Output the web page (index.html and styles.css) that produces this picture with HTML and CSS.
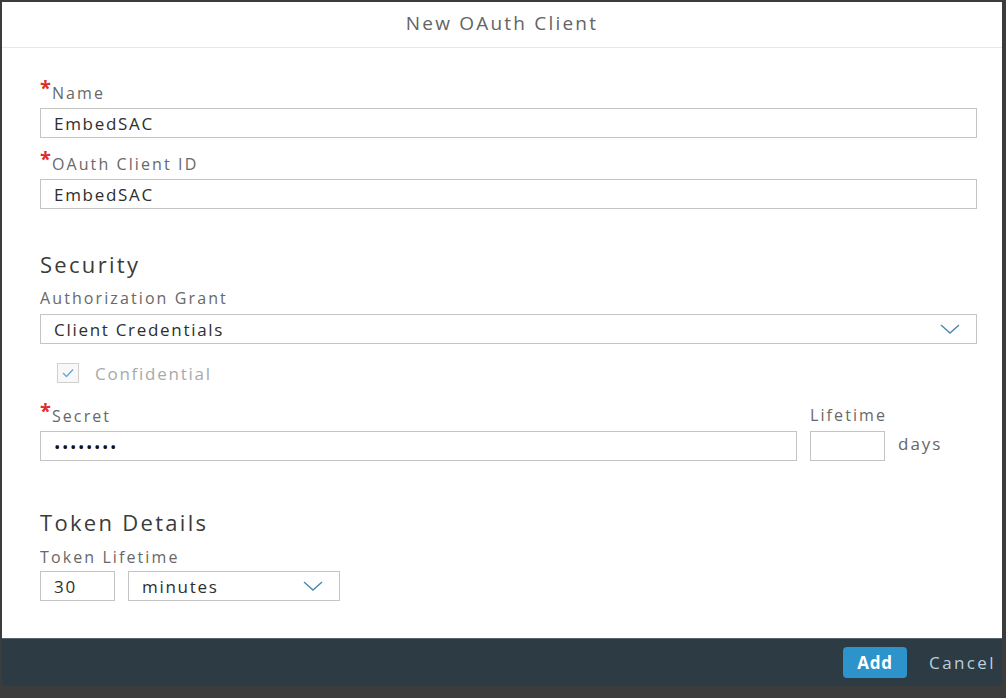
FILE: index.html
```html
<!DOCTYPE html>
<html>
<head>
<meta charset="utf-8">
<link rel="stylesheet" href="styles.css">
</head>
<body>
<div class="dialog">
  <div class="header">New OAuth Client</div>
  <div class="content">
    <div class="label"><span class="req">*</span>Name</div>
    <div class="field">EmbedSAC</div>
    <div class="label mt"><span class="req">*</span>OAuth Client ID</div>
    <div class="field">EmbedSAC</div>

    <div class="heading sec">Security</div>
    <div class="label mt-s">Authorization Grant</div>
    <div class="field select">
      <span>Client Credentials</span>
      <svg class="chev" width="20" height="10" viewBox="0 0 20 10"><path d="M1 1 L10 9 L19 1" fill="none" stroke="#4a88ab" stroke-width="1.4"/></svg>
    </div>
    <div class="check-row">
      <span class="checkbox"><svg width="14" height="10" viewBox="0 0 14 10"><path d="M2 5 L5.5 8.5 L12 1.5" fill="none" stroke="#6aa7d3" stroke-width="1.4"/></svg></span>
      <span class="check-label">Confidential</span>
    </div>
    <div class="secret-row">
      <div class="col grow">
        <div class="label"><span class="req">*</span>Secret</div>
        <div class="field"><span class="dots">••••••••</span></div>
      </div>
      <div class="col life">
        <div class="label">Lifetime</div>
        <div class="field"></div>
      </div>
      <div class="days">days</div>
    </div>

    <div class="heading tok">Token Details</div>
    <div class="label mt-t">Token Lifetime</div>
    <div class="token-row">
      <div class="field num">30</div>
      <div class="field select unit">
        <span>minutes</span>
        <svg class="chev" width="20" height="10" viewBox="0 0 20 10"><path d="M1 1 L10 9 L19 1" fill="none" stroke="#4a88ab" stroke-width="1.4"/></svg>
      </div>
    </div>
  </div>
  <div class="footer">
    <span class="btn-add">Add</span>
    <span class="btn-cancel">Cancel</span>
  </div>
</div>
</body>
</html>
```
FILE: styles.css
```css
html, body {
  margin: 0;
  padding: 0;
}
body {
  width: 1006px;
  height: 698px;
  background: #3c3c3c;
  font-family: "Open Sans", "Liberation Sans", sans-serif;
  overflow: hidden;
}
.dialog {
  margin: 2px 0 0 2px;
  width: 1000px;
  height: 684px;
  background: #ffffff;
  display: flex;
  flex-direction: column;
}
.header {
  height: 42px;
  padding-bottom: 3px;
  border-bottom: 1px solid #e6e6e6;
  display: flex;
  align-items: center;
  justify-content: center;
  font-size: 19px;
  letter-spacing: 2.2px;
  color: #646464;
}
.content {
  flex: 1;
  padding: 34px 25px 0 38px;
  display: flex;
  flex-direction: column;
}
.label {
  height: 20px;
  line-height: 20px;
  font-size: 16px;
  letter-spacing: 2.1px;
  color: #686868;
  margin-bottom: 6px;
  white-space: nowrap;
}
.req {
  color: #e22c2c;
  font-size: 20px;
  font-weight: bold;
  position: relative;
  top: -4px;
  letter-spacing: 0;
  margin-right: 1px;
}
.mt { margin-top: 15px; }
.field {
  height: 28px;
  border: 1px solid #c4c4c4;
  display: flex;
  align-items: center;
  padding-left: 13px;
  font-size: 17px;
  letter-spacing: 1.7px;
  color: #2e2e2e;
  box-sizing: content-box;
}
.select {
  justify-content: space-between;
  padding-right: 16px;
}
.chev { display: block; }
.heading {
  height: 28px;
  line-height: 28px;
  font-size: 22px;
  letter-spacing: 2.3px;
  color: #3b3b3b;
}
.sec { margin-top: 41px; }
.mt-s { margin-top: 10px; }
.check-row {
  height: 30px;
  margin-top: 14px;
  display: flex;
  align-items: center;
  padding-left: 17px;
}
.checkbox {
  width: 20px;
  height: 18px;
  border: 1px solid #cfcfcf;
  background: #f8f8f8;
  display: flex;
  align-items: center;
  justify-content: center;
}
.check-label {
  margin-left: 16px;
  font-size: 17px;
  letter-spacing: 1.75px;
  color: #a9a9a9;
}
.secret-row {
  margin-top: 17px;
  display: flex;
  gap: 13px;
  align-items: flex-end;
}
.col { display: flex; flex-direction: column; }
.grow { flex: 1; }
.life { width: 75px; }
.life .field { padding-left: 0; }
.days {
  width: 79px;
  height: 30px;
  line-height: 26px;
  font-size: 17px;
  letter-spacing: 2px;
  color: #666666;
}
.dots {
  font-size: 17px;
  letter-spacing: 1.6px;
  color: #111111;
}
.tok { margin-top: 47px; }
.mt-t { margin-top: 11px; margin-bottom: 4px; }
.token-row {
  display: flex;
  gap: 13px;
}
.num { width: 60px; }
.unit { width: 181px; }
.footer {
  height: 47px;
  border-top: 1px solid #56656d;
  background: #2d3c44;
  display: flex;
  align-items: center;
  justify-content: flex-end;
  padding-right: 6px;
  gap: 22px;
}
.btn-add {
  width: 64px;
  height: 31px;
  border-radius: 4px;
  background: #2d93cb;
  color: #ffffff;
  font-weight: bold;
  font-size: 17px;
  letter-spacing: 0.8px;
  display: flex;
  align-items: center;
  justify-content: center;
}
.btn-cancel {
  font-size: 17px;
  letter-spacing: 2.4px;
  color: #b9d0dd;
}
```
